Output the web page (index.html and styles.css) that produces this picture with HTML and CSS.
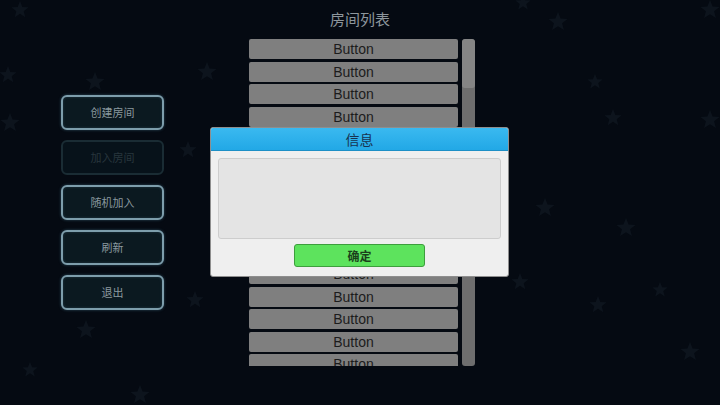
FILE: index.html
```html
<!DOCTYPE html>
<html lang="zh">
<head>
<meta charset="utf-8">
<title>房间列表</title>
<link rel="stylesheet" href="styles.css">
</head>
<body>
<div class="stage">
  <svg class="stars" width="720" height="405" viewBox="0 0 720 405" aria-hidden="true">
    <defs>
      <path id="st" d="M0,-10 L2.6,-3.4 L9.5,-3.1 L4.1,1.3 L5.9,8.1 L0,4.2 L-5.9,8.1 L-4.1,1.3 L-9.5,-3.1 L-2.6,-3.4 Z"/>
    </defs>
    <g fill="#0d141d">
      <use href="#st" transform="translate(20,10) scale(0.9)"/>
      <use href="#st" transform="translate(8,75) scale(0.9)"/>
      <use href="#st" transform="translate(95,82) scale(1)"/>
      <use href="#st" transform="translate(207,72) scale(1)"/>
      <use href="#st" transform="translate(10,123) scale(1)"/>
      <use href="#st" transform="translate(188,150) scale(0.9)"/>
      <use href="#st" transform="translate(523,3) scale(0.8)"/>
      <use href="#st" transform="translate(558,22) scale(1)"/>
      <use href="#st" transform="translate(595,82) scale(0.8)"/>
      <use href="#st" transform="translate(613,118) scale(0.9)"/>
      <use href="#st" transform="translate(710,10) scale(1)"/>
      <use href="#st" transform="translate(710,120) scale(1)"/>
      <use href="#st" transform="translate(545,208) scale(1)"/>
      <use href="#st" transform="translate(626,228) scale(1)"/>
      <use href="#st" transform="translate(520,282) scale(0.9)"/>
      <use href="#st" transform="translate(598,305) scale(0.9)"/>
      <use href="#st" transform="translate(690,352) scale(1)"/>
      <use href="#st" transform="translate(86,330) scale(1)"/>
      <use href="#st" transform="translate(140,395) scale(1)"/>
      <use href="#st" transform="translate(30,370) scale(0.8)"/>
      <use href="#st" transform="translate(195,300) scale(0.9)"/>
      <use href="#st" transform="translate(660,290) scale(0.8)"/>
    </g>
  </svg>

  <div class="layout">
    <nav class="side">
      <button class="side-btn">创建房间</button>
      <button class="side-btn disabled">加入房间</button>
      <button class="side-btn">随机加入</button>
      <button class="side-btn">刷新</button>
      <button class="side-btn">退出</button>
    </nav>

    <section class="rooms">
      <h1 class="rooms-title">房间列表</h1>
      <div class="rooms-body">
        <div class="list">
          <div class="row">Button</div>
          <div class="row">Button</div>
          <div class="row">Button</div>
          <div class="row">Button</div>
          <div class="row">Button</div>
          <div class="row">Button</div>
          <div class="row">Button</div>
          <div class="row">Button</div>
          <div class="row">Button</div>
          <div class="row">Button</div>
          <div class="row">Button</div>
          <div class="row">Button</div>
          <div class="row">Button</div>
          <div class="row">Button</div>
          <div class="row">Button</div>
        </div>
        <div class="scrollbar"><div class="handle"></div></div>
      </div>
    </section>
  </div>

  <div class="dialog">
    <div class="dialog-head">信息</div>
    <div class="dialog-body">
      <div class="message"></div>
      <button class="ok">确定</button>
    </div>
  </div>
</div>
</body>
</html>
```

FILE: styles.css
```css
html, body {
  margin: 0;
  padding: 0;
  background: #050a12;
}

body {
  font-family: "Liberation Sans", "Noto Sans CJK SC", sans-serif;
}

.stage {
  position: relative;
  width: 720px;
  height: 405px;
  overflow: hidden;
  background: #050a12;
}

.stars {
  position: absolute;
  left: 0;
  top: 0;
}

.layout {
  position: relative;
  display: flex;
}

.side {
  display: flex;
  flex-direction: column;
  gap: 10px;
  padding: 95px 0 0 61px;
  width: 103px;
}

.side-btn {
  box-sizing: border-box;
  height: 35px;
  width: 103px;
  margin: 0;
  padding: 0;
  border: 2px solid #7d9dab;
  border-radius: 6px;
  background: #0b1920;
  box-shadow: 0 0 3px rgba(90, 150, 180, 0.45), inset 0 0 3px rgba(90, 150, 180, 0.25);
  color: #8a989e;
  font-family: "Noto Sans CJK SC", sans-serif;
  font-size: 11px;
  line-height: 1;
}

.side-btn.disabled {
  border-color: #1a2c34;
  background: #07121a;
  box-shadow: none;
  color: #27363d;
}

.rooms {
  margin-left: 85px;
  width: 226px;
}

.rooms-title {
  margin: 0;
  height: 39px;
  line-height: 38px;
  text-align: center;
  font-family: "Noto Sans CJK SC", sans-serif;
  font-weight: normal;
  font-size: 15px;
  color: #8d969c;
  padding-right: 4px;
}

.rooms-body {
  display: flex;
  gap: 4px;
}

.list {
  width: 209px;
  height: 327px;
  overflow: hidden;
}

.row {
  height: 20px;
  margin-bottom: 2.5px;
  background: #7f7f7f;
  border-radius: 2px;
  text-align: center;
  line-height: 20px;
  font-size: 14px;
  color: #1c1c1c;
}

.scrollbar {
  width: 13px;
  height: 327px;
  border-radius: 3px;
  background: #6e6e6e;
  overflow: hidden;
}

.handle {
  height: 49px;
  background: #858585;
  border-radius: 3px;
}

.dialog {
  position: absolute;
  left: 210px;
  top: 127px;
  width: 299px;
  height: 150px;
  box-sizing: border-box;
  border: 1px solid #8e8e8e;
  border-radius: 3px;
  background: #efefef;
  overflow: hidden;
  display: flex;
  flex-direction: column;
}

.dialog-head {
  height: 22px;
  background: linear-gradient(#3ab9f0, #22a8e6);
  color: #183350;
  text-align: center;
  line-height: 22px;
  font-family: "Noto Sans CJK SC", sans-serif;
  font-size: 14px;
  border-bottom: 1px solid #1d8fc6;
}

.dialog-body {
  flex: 1;
  display: flex;
  flex-direction: column;
  align-items: center;
  padding: 7px 7px 0;
}

.message {
  box-sizing: border-box;
  width: 100%;
  height: 81px;
  background: #e4e4e4;
  border: 1px solid #cdcdcd;
  border-radius: 3px;
}

.ok {
  box-sizing: border-box;
  margin-top: 5px;
  width: 131px;
  height: 23px;
  padding: 0;
  background: #5de35d;
  border: 1px solid #3d9e3d;
  border-radius: 3px;
  color: #1b3f1b;
  font-family: "Noto Sans CJK SC", sans-serif;
  font-weight: bold;
  font-size: 12px;
  line-height: 1;
}
```
